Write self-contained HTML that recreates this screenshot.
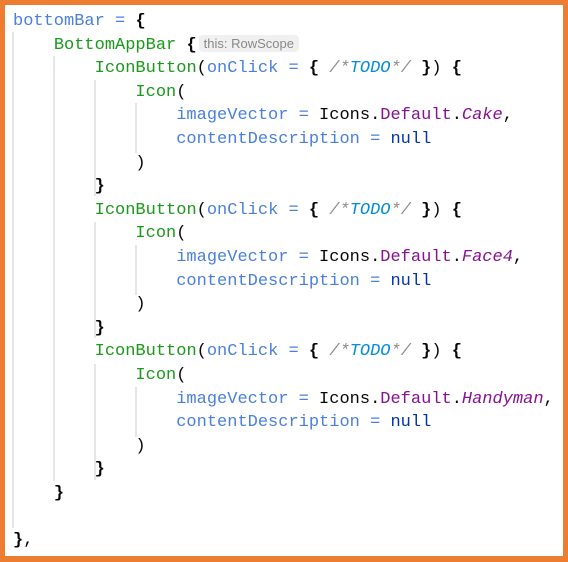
<!DOCTYPE html>
<html><head><style>
html,body{margin:0;padding:0;}
body{width:568px;height:562px;background:#ED7D31;position:relative;overflow:hidden;}
.in{position:absolute;left:5px;top:5px;width:558px;height:551px;background:#fff;}
pre{position:absolute;left:8px;top:5px;margin:0;font-family:"Liberation Mono",monospace;font-size:17px;line-height:23.6px;color:#080808;}
.v{color:#4A7FE0}.f{color:#1A9A1A}.p{color:#871094}.i{font-style:italic}.c{color:#8C8C8C;font-style:italic}.t{color:#008DDE;font-style:italic}.n{color:#0033B3;}.b{font-weight:bold}
.g{position:absolute;width:1.5px;background:#E6E6E6;}
.h{display:inline-block;font-family:"Liberation Sans",sans-serif;font-size:13px;color:#888;background:#F0F0F0;border-radius:4px;padding:0 5px;line-height:17px;vertical-align:1px;margin-left:2px;}
</style></head><body><div class="in">
<div class="g" style="left:7px;top:27px;height:496px"></div>
<div class="g" style="left:48px;top:51px;height:425px"></div>
<div class="g" style="left:89px;top:75px;height:116px"></div>
<div class="g" style="left:130px;top:98px;height:50px"></div>
<div class="g" style="left:89px;top:217px;height:116px"></div>
<div class="g" style="left:130px;top:240px;height:50px"></div>
<div class="g" style="left:89px;top:359px;height:116px"></div>
<div class="g" style="left:130px;top:382px;height:50px"></div>
<pre><span class="v">bottomBar</span> <span class="v">=</span> <span class="b">{</span>
    <span class="f">BottomAppBar</span> <span class="b">{</span><span class="h">this: RowScope</span>
        <span class="f">IconButton</span>(<span class="v">onClick</span> <span class="v">=</span> <span class="b">{</span> <span class="c">/*</span><span class="t">TODO</span><span class="c">*/</span> <span class="b">}</span>) <span class="b">{</span>
            <span class="f">Icon</span>(
                <span class="v">imageVector</span> <span class="v">=</span> Icons.<span class="p">Default</span>.<span class="p i">Cake</span>,
                <span class="v">contentDescription</span> <span class="v">=</span> <span class="n">null</span>
            )
        <span class="b">}</span>
        <span class="f">IconButton</span>(<span class="v">onClick</span> <span class="v">=</span> <span class="b">{</span> <span class="c">/*</span><span class="t">TODO</span><span class="c">*/</span> <span class="b">}</span>) <span class="b">{</span>
            <span class="f">Icon</span>(
                <span class="v">imageVector</span> <span class="v">=</span> Icons.<span class="p">Default</span>.<span class="p i">Face4</span>,
                <span class="v">contentDescription</span> <span class="v">=</span> <span class="n">null</span>
            )
        <span class="b">}</span>
        <span class="f">IconButton</span>(<span class="v">onClick</span> <span class="v">=</span> <span class="b">{</span> <span class="c">/*</span><span class="t">TODO</span><span class="c">*/</span> <span class="b">}</span>) <span class="b">{</span>
            <span class="f">Icon</span>(
                <span class="v">imageVector</span> <span class="v">=</span> Icons.<span class="p">Default</span>.<span class="p i">Handyman</span>,
                <span class="v">contentDescription</span> <span class="v">=</span> <span class="n">null</span>
            )
        <span class="b">}</span>
    <span class="b">}</span>

<span class="b">}</span>,</pre>
</div></body></html>
